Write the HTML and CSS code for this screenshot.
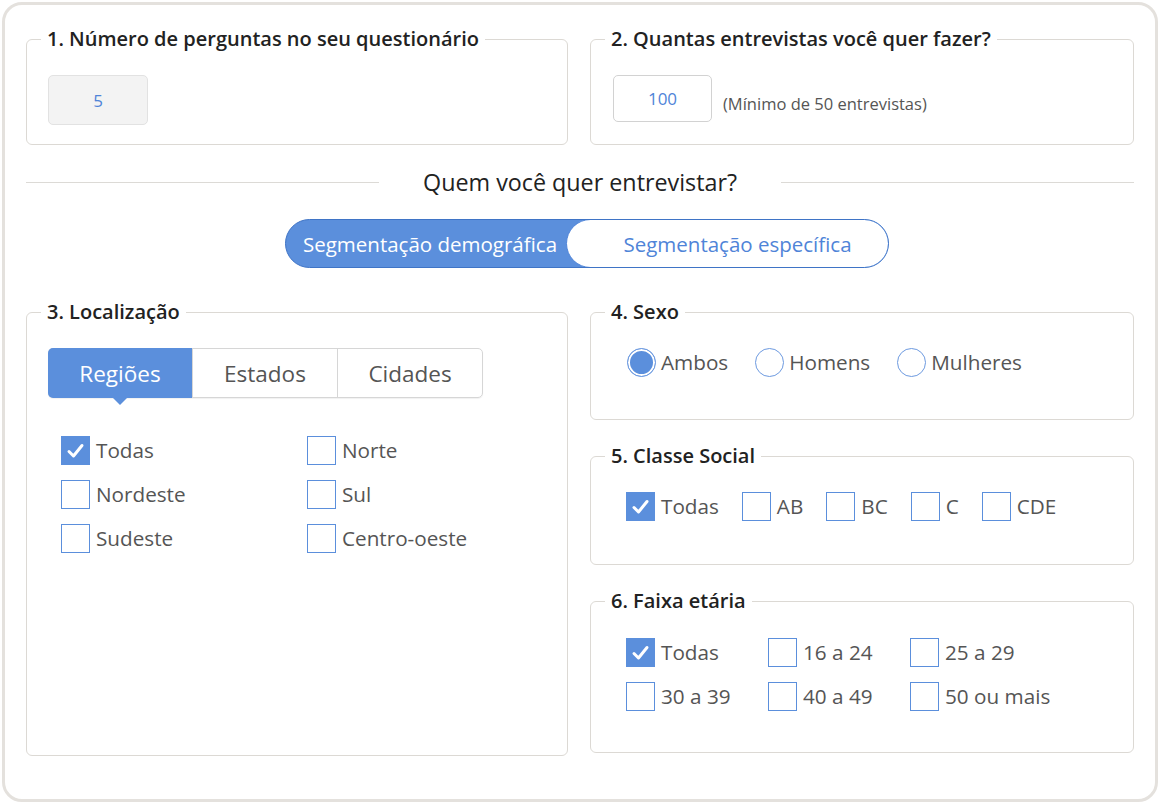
FILE: index.html
```html
<!DOCTYPE html>
<html lang="pt-BR">
<head>
<meta charset="utf-8">
<link rel="stylesheet" href="styles.css">
</head>
<body>
<div class="frame">
  <div class="top-row">
    <fieldset class="box box-top">
      <legend>1. Número de perguntas no seu questionário</legend>
      <div class="field field-disabled">5</div>
    </fieldset>
    <fieldset class="box box-top">
      <legend>2. Quantas entrevistas você quer fazer?</legend>
      <div class="inline">
        <div class="field field-small">100</div>
        <span class="hint">(Mínimo de 50 entrevistas)</span>
      </div>
    </fieldset>
  </div>

  <div class="divider">
    <span class="line"></span>
    <h2 class="divider-title">Quem você quer entrevistar?</h2>
    <span class="line"></span>
  </div>

  <div class="toggle-wrap">
    <div class="toggle">
      <span class="seg seg-active">Segmentação demográfica</span>
      <span class="seg seg-other">Segmentação específica</span>
    </div>
  </div>

  <div class="bottom-row">
    <fieldset class="box box-loc">
      <legend>3. Localização</legend>
      <div class="tabs">
        <span class="tab tab-active">Regiões</span>
        <span class="tab">Estados</span>
        <span class="tab">Cidades</span>
      </div>
      <div class="loc-grid">
        <label class="opt"><span class="cb cb-on"><svg viewBox="0 0 29 29" width="29" height="29"><path d="M8 15.5 L12.5 20 L21 9.5" fill="none" stroke="#fff" stroke-width="3" stroke-linecap="round" stroke-linejoin="round"/></svg></span>Todas</label>
        <label class="opt"><span class="cb"></span>Norte</label>
        <label class="opt"><span class="cb"></span>Nordeste</label>
        <label class="opt"><span class="cb"></span>Sul</label>
        <label class="opt"><span class="cb"></span>Sudeste</label>
        <label class="opt"><span class="cb"></span>Centro-oeste</label>
      </div>
    </fieldset>

    <div class="right-col">
      <fieldset class="box box-sexo">
        <legend>4. Sexo</legend>
        <div class="opt-row opt-row-radio">
          <label class="opt opt-radio"><span class="rd rd-on"></span>Ambos</label>
          <label class="opt opt-radio"><span class="rd"></span>Homens</label>
          <label class="opt opt-radio"><span class="rd"></span>Mulheres</label>
        </div>
      </fieldset>

      <fieldset class="box box-classe">
        <legend>5. Classe Social</legend>
        <div class="opt-row">
          <label class="opt"><span class="cb cb-on"><svg viewBox="0 0 29 29" width="29" height="29"><path d="M8 15.5 L12.5 20 L21 9.5" fill="none" stroke="#fff" stroke-width="3" stroke-linecap="round" stroke-linejoin="round"/></svg></span>Todas</label>
          <label class="opt"><span class="cb"></span>AB</label>
          <label class="opt"><span class="cb"></span>BC</label>
          <label class="opt"><span class="cb"></span>C</label>
          <label class="opt"><span class="cb"></span>CDE</label>
        </div>
      </fieldset>

      <fieldset class="box box-idade">
        <legend>6. Faixa etária</legend>
        <div class="age-grid">
          <label class="opt"><span class="cb cb-on"><svg viewBox="0 0 29 29" width="29" height="29"><path d="M8 15.5 L12.5 20 L21 9.5" fill="none" stroke="#fff" stroke-width="3" stroke-linecap="round" stroke-linejoin="round"/></svg></span>Todas</label>
          <label class="opt"><span class="cb"></span>16 a 24</label>
          <label class="opt"><span class="cb"></span>25 a 29</label>
          <label class="opt"><span class="cb"></span>30 a 39</label>
          <label class="opt"><span class="cb"></span>40 a 49</label>
          <label class="opt"><span class="cb"></span>50 ou mais</label>
        </div>
      </fieldset>
    </div>
  </div>
</div>
</body>
</html>
```

FILE: styles.css
```css
* { box-sizing: border-box; }

html, body {
  margin: 0;
  padding: 0;
  background: #ffffff;
}

body {
  font-family: "Open Sans", "Liberation Sans", sans-serif;
  color: #555555;
}

.frame {
  margin: 2px 2px 0 2px;
  width: 1156px;
  height: 800px;
  border: 3px solid #e4e1dd;
  border-radius: 20px;
  padding: 22px 21px 0 21px;
}

.top-row {
  display: grid;
  grid-template-columns: 542px 1fr;
  column-gap: 22px;
}

.box {
  margin: 0;
  min-width: 0;
  border: 1px solid #dcd9d4;
  border-radius: 6px;
  padding: 24px 21px 0 21px;
}

.box legend {
  margin-left: -7px;
  padding: 0 6px;
  font-size: 20px;
  line-height: 24px;
  font-weight: 600;
  color: #222222;
}

.box-top { height: 118px; }

.field {
  width: 100px;
  height: 50px;
  border: 1px solid #dcdcdc;
  border-radius: 5px;
  display: flex;
  align-items: center;
  justify-content: center;
  font-size: 17px;
  color: #4f84d8;
}

.field-disabled {
  background: #f3f3f3;
  border-color: #e2e2e2;
}

.inline {
  display: flex;
  align-items: center;
  margin-left: 1px;
  gap: 11px;
}

.field-small {
  width: 99px;
  height: 47px;
  border-color: #d2d2d2;
}

.hint {
  font-size: 16.5px;
  color: #555555;
  margin-top: 9px;
}

.divider {
  margin-top: 22px;
  height: 30px;
  display: flex;
  align-items: center;
  gap: 44px;
}

.line {
  flex: 1;
  height: 1px;
  background: #dcdad6;
}

.divider-title {
  margin: 0;
  font-size: 23.3px;
  line-height: 30px;
  font-weight: 400;
  color: #222222;
}

.toggle-wrap {
  margin-top: 22px;
  display: flex;
  padding-left: 259px;
}

.toggle {
  width: 604px;
  height: 49px;
  display: flex;
  background: #5b8fdc;
  border: 1px solid #3f74c6;
  border-radius: 25px;
  overflow: hidden;
}

.seg {
  display: flex;
  align-items: center;
  justify-content: center;
  font-size: 20.5px;
}

.seg-active {
  flex: 1;
  color: #ffffff;
  padding-left: 8px;
}

.seg-other {
  width: 323px;
  margin: -1px -1px -1px 0;
  padding-left: 20px;
  background: #ffffff;
  color: #4f84d8;
  border: 1px solid #4f84d8;
  border-radius: 25px;
}

.bottom-row {
  margin-top: 32px;
  display: grid;
  grid-template-columns: 542px 1fr;
  column-gap: 22px;
  align-items: start;
}

.box-loc { height: 456px; }

.tabs {
  display: flex;
  width: 435px;
  height: 50px;
  border: 1px solid #d6d6d6;
  border-radius: 5px;
  box-shadow: 0 1px 1px rgba(0,0,0,0.06);
}

.tab {
  flex: 1;
  display: flex;
  align-items: center;
  justify-content: center;
  font-size: 22.5px;
  color: #555555;
  border-left: 1px solid #d6d6d6;
  position: relative;
}

.tab:first-child { border-left: none; }

.tab-active {
  background: #5b8fdc;
  color: #ffffff;
  margin: -1px 0 -1px -1px;
  border-radius: 5px 0 0 5px;
}

.tab-active::after {
  content: "";
  position: absolute;
  left: 50%;
  bottom: -7px;
  margin-left: -7px;
  border-left: 7px solid transparent;
  border-right: 7px solid transparent;
  border-top: 7px solid #5b8fdc;
}

.loc-grid {
  margin: 38px 0 0 13px;
  display: grid;
  grid-template-columns: 246px auto;
  row-gap: 15px;
}

.opt {
  display: flex;
  align-items: center;
  gap: 6px;
  font-size: 20.7px;
  line-height: 29px;
  color: #555555;
}

.cb {
  width: 29px;
  height: 29px;
  flex: none;
  border: 1px solid #5b8fdc;
  background: #ffffff;
  display: block;
}

.cb svg { display: block; margin: -1px; }

.cb-on { background: #5b8fdc; }

.rd {
  width: 29px;
  height: 29px;
  flex: none;
  border: 1px solid #6d9ae0;
  border-radius: 50%;
  background: #ffffff;
}

.rd-on {
  background: #5b8fdc;
  box-shadow: inset 0 0 0 2px #ffffff;
}

.right-col {
  display: flex;
  flex-direction: column;
  gap: 24px;
}

.box-sexo { height: 120px; }
.box-classe { height: 121px; }
.box-idade { height: 164px; }

.opt-row {
  margin-left: 14px;
  display: flex;
  gap: 23px;
}

.opt-row-radio { gap: 27px; margin-left: 15px; }
.opt-radio { gap: 5px; }

.age-grid {
  margin: 1px 0 0 14px;
  display: grid;
  grid-template-columns: 142px 142px auto;
  row-gap: 15px;
}
```
